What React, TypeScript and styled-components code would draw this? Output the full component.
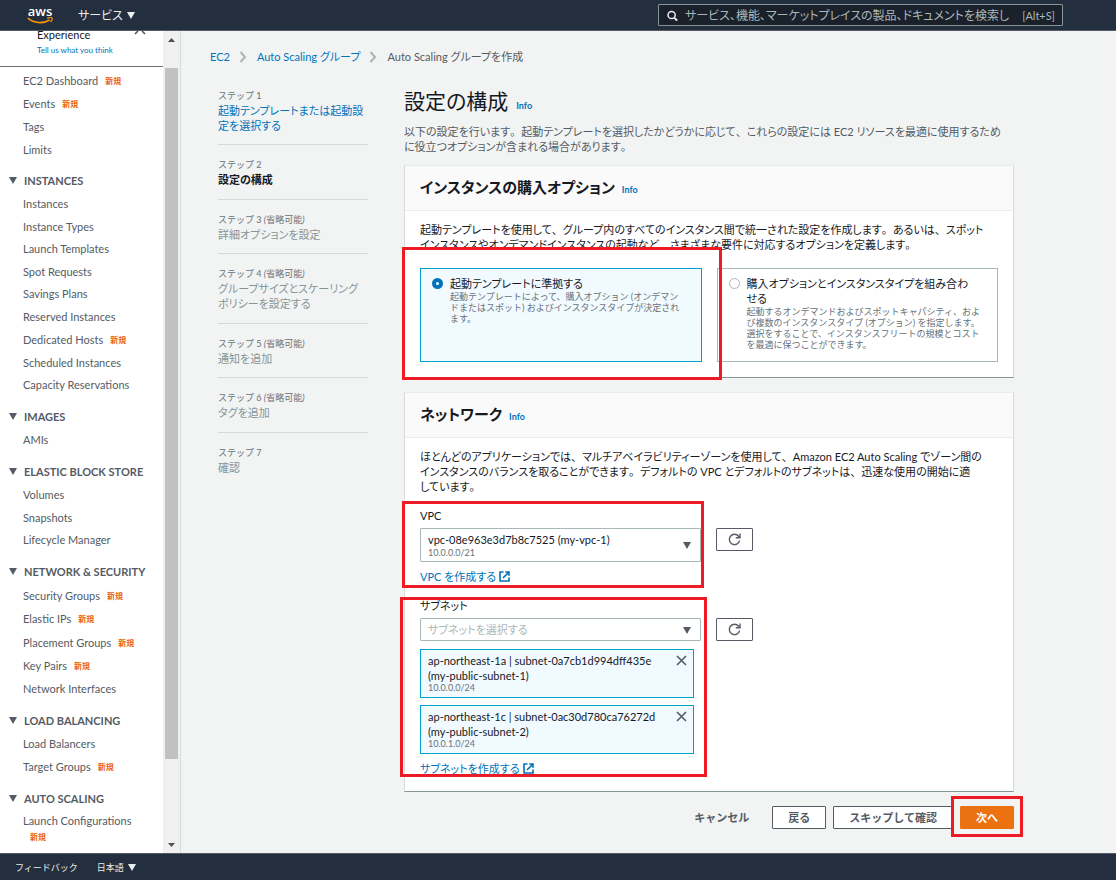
import React from "react";
import styled, { createGlobalStyle, css } from "styled-components";

const GlobalStyle = createGlobalStyle`
  *, *::before, *::after { box-sizing: border-box; }
  body {
    margin: 0;
    font-family: Lato, "Noto Sans CJK JP", sans-serif;
    font-size: 11px;
    line-height: 15px;
    font-feature-settings: "palt";
    color: #16191f;
    background: #f2f3f3;
  }
  button, input, select { font: inherit; font-feature-settings: inherit; color: inherit; margin: 0; }
  a { color: #0073bb; text-decoration: none; }
  h1, h2, h3, p, ul, ol { margin: 0; padding: 0; }
  ul, ol { list-style: none; }
`;

/* Small print and button labels keep full-width kana. */
const fullWidthKana = css`font-feature-settings: normal;`;

const Page = styled.div`
  display: flex;
  flex-direction: column;
  min-height: 100vh;
`;

/* ---------- top bar ---------- */
const TopBar = styled.header`
  display: flex;
  align-items: center;
  height: 31px;
  padding: 0 53px 0 27px;
  background: #232f3e;
  border-bottom: 1px solid #545b64;
  color: #fff;
`;

const Logo = styled.a`
  display: flex;
  flex-direction: column;
  align-items: center;
  width: 26px;
  margin-right: 25px;
  color: #fff;
  font-family: "Open Sans", sans-serif;
  font-size: 13px;
  font-weight: 600;
  line-height: 11px;
`;

const MenuButton = styled.button<{ $small?: boolean }>`
  display: flex;
  align-items: center;
  gap: 4px;
  padding: 0;
  border: 0;
  background: none;
  color: #eaeded;
  font-size: ${(p) => (p.$small ? 9 : 12)}px;
  cursor: pointer;
`;

const SearchBox = styled.label`
  display: flex;
  align-items: center;
  gap: 7px;
  width: 405px;
  height: 22px;
  margin-left: auto;
  padding: 0 7px 0 8px;
  border: 1px solid #879596;
  border-radius: 1px;
  background: #1a212b;
  color: #aab7b8;
`;

const SearchInput = styled.input`
  flex: 1;
  min-width: 0;
  padding: 0;
  border: 0;
  outline: 0;
  background: none;
  font-size: 12px;
  &::placeholder { color: #aab7b8; opacity: 1; }
`;

/* ---------- body ---------- */
const Body = styled.div`
  display: flex;
  flex: 1;
`;

const Sidebar = styled.nav`
  width: 163px;
  flex: none;
  height: calc(100vh - 58px);
  overflow: hidden;
  background: #fff;
  color: #545b64;
`;

const Experience = styled.div`
  display: flex;
  justify-content: space-between;
  height: 36px;
  margin-bottom: 1px;
  padding: 0 17px 0 37px;
  border-bottom: 1px solid #687078;
  color: #16191f;
  line-height: 8px;
`;

const ExperienceLink = styled.a`
  display: block;
  margin-top: 4px;
  font-size: 8px;
  line-height: 15px;
`;

const NavGroup = styled.section`
  margin-bottom: 9px;
`;

const NavTitle = styled.h3`
  display: flex;
  align-items: center;
  gap: 7px;
  height: 23px;
  padding-left: 9px;
  font-size: 11px;
  font-weight: 700;
`;

const NavItem = styled.li<{ $badge?: boolean }>`
  display: flex;
  flex-wrap: wrap;
  align-items: center;
  column-gap: 7px;
  min-height: ${(p) => (p.$badge ? 24 : 23)}px;
  padding: 0 12px 0 23px;
  &:nth-child(even) { min-height: ${(p) => (p.$badge ? 23 : 22)}px; }
`;

const NavLink = styled.a`
  color: #545b64;
  line-height: 21px;
  white-space: nowrap;
`;

const NewBadge = styled.span<{ $wrapped?: boolean }>`
  padding: ${(p) => (p.$wrapped ? "0 0 0 7px" : "2px 0 0")};
  color: #eb5f07;
  font-size: 8px;
  font-weight: 700;
  line-height: 13px;
`;

const Scrollbar = styled.div`
  display: flex;
  flex-direction: column;
  align-items: center;
  width: 18px;
  flex: none;
  padding: 7px 2px 6px 1px;
  background: #f0f0f0;
  border-right: 1px solid #d5dbdb;
`;

const Track = styled.div`
  display: flex;
  flex-direction: column;
  flex: 1;
  width: 13px;
  padding: 26px 0 84px;
`;

const Thumb = styled.div`
  flex: 1;
  background: #c1c1c1;
`;

const Main = styled.main`
  flex: 1;
  min-width: 0;
  padding: 18px 102px 22px 29px;
`;

const Crumbs = styled.ol`
  display: flex;
  align-items: center;
  gap: 10px;
  color: #545b64;
  li { display: flex; align-items: center; gap: 9px; }
`;

const Columns = styled.div`
  display: flex;
  gap: 36px;
  padding: 23px 0 0 8px;
`;

const Steps = styled.ol`
  width: 150px;
  flex: none;
  padding-top: 1px;
`;

const Step = styled.li`
  padding-bottom: 11px;
  margin-bottom: 12px;
  border-bottom: 1px solid #d5dbdb;
  &:nth-child(even) { padding-bottom: 12px; }
  &:last-child { border-bottom: 0; }
`;

const StepNumber = styled.div`
  ${fullWidthKana}
  color: #687078;
  font-size: 9px;
  white-space: nowrap;
  em { font-style: italic; font-synthesis: none; }
`;

const StepName = styled.div<{ $current?: boolean }>`
  color: ${(p) => (p.$current ? "#16191f" : "#879596")};
  font-weight: ${(p) => (p.$current ? 700 : 400)};
  white-space: nowrap;
`;

const Content = styled.form`
  flex: 1;
  min-width: 0;
`;

const TitleRow = styled.div`
  display: flex;
  align-items: baseline;
  gap: 8px;
`;

const PageTitle = styled.h1`
  font-size: 21px;
  font-weight: 400;
  line-height: 27px;
`;

const InfoLink = styled.a`
  font-size: 9px;
  font-weight: 700;
`;

const Intro = styled.p`
  margin: 10px 0 11px;
  color: #545b64;
`;

const Punctuation = styled.span`
  ${fullWidthKana}
`;

const Card = styled.section`
  margin-bottom: 14px;
  border: 1px solid #d5dbdb;
  border-top-color: #eaeded;
  border-bottom-color: #879596;
  background: #fff;
`;

const CardHeader = styled.header`
  display: flex;
  align-items: baseline;
  gap: 7px;
  padding: 11px 15px 13px;
  border-bottom: 1px solid #eaeded;
  background: #fafafa;
`;

const CardTitle = styled.h2`
  font-size: 15px;
  font-weight: 700;
  line-height: 20px;
`;

const CardBody = styled.div`
  padding: 11px 15px 15px;
`;

const Tiles = styled.div`
  display: flex;
  gap: 15px;
  margin-top: 16px;
`;

/* Red marker frame laid over the part that a reader has to look at. */
const Marker = styled.span<{ $inset: string }>`
  position: absolute;
  inset: ${(p) => p.$inset};
  z-index: 2;
  border: 3px solid #ed1c24;
  pointer-events: none;
`;

const Marked = styled.div`
  position: relative;
`;

const TileSlot = styled(Marked)`
  display: flex;
  flex: 1 1 0;
  min-width: 0;
`;

const Tile = styled.label<{ $selected?: boolean }>`
  display: flex;
  flex: 1;
  gap: 7px;
  min-height: 94px;
  padding: 7px 15px 11px 11px;
  border: 1px solid ${(p) => (p.$selected ? "#00a1c9" : "#aab7b8")};
  background: ${(p) => (p.$selected ? "#f1faff" : "#fff")};
`;

const Radio = styled.input`
  appearance: none;
  flex: none;
  width: 11px;
  height: 11px;
  margin: 2px 0 0;
  border: 1px solid #aab7b8;
  border-radius: 50%;
  background: #fff;
  &:checked { border: 4px solid #0073bb; }
`;

const TileTitle = styled.span`
  display: block;
  padding-right: 8px;
`;

const TileHint = styled.span`
  ${fullWidthKana}
  display: block;
  color: #687078;
  font-size: 9px;
  line-height: 11px;
`;

const Field = styled(Marked)`
  width: 281px;
`;

const FieldRow = styled.div`
  display: flex;
  align-items: flex-start;
  gap: 15px;
  margin-top: 14px;
`;

const FieldLabel = styled.label`
  display: block;
  margin-bottom: 5px;
`;

const SelectBox = styled.div`
  position: relative;
  display: flex;
  svg {
    position: absolute;
    right: 10px;
    top: calc(50% - 3px);
    pointer-events: none;
  }
`;

const Select = styled.select<{ $tall?: boolean }>`
  appearance: none;
  width: 100%;
  height: ${(p) => (p.$tall ? 34 : 23)}px;
  padding: ${(p) => (p.$tall ? "1px 24px 13px 7px" : "0 24px 0 7px")};
  border: 1px solid #aab7b8;
  border-radius: 1px;
  background: #fff;
  color: ${(p) => (p.$tall ? "#16191f" : "#aab7b8")};
`;

const SelectCaption = styled.span`
  position: absolute;
  left: 8px;
  bottom: 4px;
  color: #687078;
  font-size: 9px;
  line-height: 11px;
  pointer-events: none;
`;

const RefreshButton = styled.button`
  display: flex;
  align-items: center;
  justify-content: center;
  width: 37px;
  height: 23px;
  margin-top: 20px;
  padding: 0;
  border: 1px solid #545b64;
  border-radius: 1px;
  background: #fff;
`;

const ExternalLink = styled.a`
  display: inline-flex;
  align-items: center;
  gap: 3px;
  margin-top: 7px;
  vertical-align: top;
`;

const TokenList = styled.ul`
  padding-top: 1px;
`;

const Token = styled.li`
  display: flex;
  justify-content: space-between;
  width: 274px;
  margin-top: 7px;
  padding: 3px 6px 4px 7px;
  border: 1px solid #00a1c9;
  background: #f1faff;
`;

const TokenCaption = styled.div`
  color: #687078;
  font-size: 9px;
  line-height: 10px;
`;

const RemoveButton = styled.button`
  display: flex;
  height: 11px;
  margin-top: 2px;
  padding: 0;
  border: 0;
  background: none;
`;

const Actions = styled.div`
  display: flex;
  justify-content: flex-end;
  gap: 7px;
`;

const Button = styled.button<{ $kind?: "link" | "primary" }>`
  height: 23px;
  padding: 0 15px;
  border: 1px solid #545b64;
  border-radius: 1px;
  background: #fff;
  color: #545b64;
  font-weight: 700;
  line-height: 19px;
  white-space: nowrap;
  && { ${fullWidthKana} }
  ${(p) => p.$kind === "link" && css`border-color: transparent; background: none;`}
  ${(p) => p.$kind === "primary" && css`border-color: #ec7211; background: #ec7211; color: #fff;`}
`;

const BottomBar = styled.footer`
  ${fullWidthKana}
  display: flex;
  align-items: center;
  gap: 19px;
  height: 27px;
  padding: 0 15px;
  background: #232f3e;
  border-top: 1px solid #545b64;
  font-size: 9px;
  a { color: #eaeded; }
`;

/* ---------- drawings ---------- */
const Caret = ({ up = false, size = 8, color = "#545b64", tall = 7 }) => (
  <svg width={size} height={tall} viewBox="0 0 8 7" preserveAspectRatio="none" aria-hidden="true">
    <path d={up ? "M0 7h8L4 0z" : "M0 0h8L4 7z"} fill={color} />
  </svg>
);

const Chevron = () => (
  <svg width="8" height="12" viewBox="0 0 8 12" fill="none" stroke="#aab7b8" strokeWidth="2" aria-hidden="true">
    <path d="M1.5 1L6 6l-4.5 5" />
  </svg>
);

const RefreshIcon = () => (
  <svg width="13" height="13" viewBox="0 0 13 13" fill="none" stroke="#545b64" strokeWidth="1.4" aria-hidden="true">
    <path d="M11.6 7.6A5.2 5.2 0 1 1 10.6 3.2L11.8 4.6" />
    <path d="M12 .6V4.8H7.8" />
  </svg>
);

const ExternalIcon = () => (
  <svg width="11" height="11" viewBox="0 0 11 11" fill="none" stroke="#0073bb" strokeWidth="1.6" aria-hidden="true">
    <path d="M4.5 1H1v9h9V6.5M6.3 1H10v3.7M10 1L4 7" />
  </svg>
);

const CloseIcon = () => (
  <svg width="11" height="11" viewBox="0 0 11 11" stroke="#545b64" strokeWidth="1.6" aria-hidden="true">
    <path d="M1 1l9 9M10 1l-9 9" />
  </svg>
);

const SearchIcon = () => (
  <svg width="11" height="12" viewBox="0 0 11 12" fill="none" stroke="#eaeded" aria-hidden="true">
    <circle cx="4.6" cy="6" r="3.6" strokeWidth="1.5" />
    <path d="M7.2 8.6l3 3" strokeWidth="2" />
  </svg>
);

const Smile = () => (
  <svg width="26" height="7" viewBox="0 0 26 7" fill="none" stroke="#f90" aria-hidden="true">
    <path d="M.8 1.2C7 6.4 16 7 22.6 3" strokeWidth="1.6" />
    <path d="M20.2 1.4c2-.8 4.4-.9 4.8-.4s-.2 2.6-1.5 4.2" strokeWidth="1.2" />
  </svg>
);

/* ---------- data ---------- */
type Item = [string, boolean?];
const groups: { title?: string; items: Item[] }[] = [
  { items: [["EC2 Dashboard", true], ["Events", true], ["Tags"], ["Limits"]] },
  {
    title: "INSTANCES",
    items: [
      ["Instances"], ["Instance Types"], ["Launch Templates"], ["Spot Requests"], ["Savings Plans"],
      ["Reserved Instances"], ["Dedicated Hosts", true], ["Scheduled Instances"], ["Capacity Reservations"],
    ],
  },
  { title: "IMAGES", items: [["AMIs"]] },
  { title: "ELASTIC BLOCK STORE", items: [["Volumes"], ["Snapshots"], ["Lifecycle Manager"]] },
  {
    title: "NETWORK & SECURITY",
    items: [["Security Groups", true], ["Elastic IPs", true], ["Placement Groups", true], ["Key Pairs", true], ["Network Interfaces"]],
  },
  { title: "LOAD BALANCING", items: [["Load Balancers"], ["Target Groups", true]] },
  { title: "AUTO SCALING", items: [["Launch Configurations", true]] },
];

const steps: { n: number; optional?: boolean; lines: string[]; link?: boolean; current?: boolean }[] = [
  { n: 1, lines: ["起動テンプレートまたは起動設", "定を選択する"], link: true },
  { n: 2, lines: ["設定の構成"], current: true },
  { n: 3, optional: true, lines: ["詳細オプションを設定"] },
  { n: 4, optional: true, lines: ["グループサイズとスケーリング", "ポリシーを設定する"] },
  { n: 5, optional: true, lines: ["通知を追加"] },
  { n: 6, optional: true, lines: ["タグを追加"] },
  { n: 7, lines: ["確認"] },
];

const introLines = [
  "以下の設定を行います。起動テンプレートを選択したかどうかに応じて、これらの設定には EC2 リソースを最適に使用するため",
  "に役立つオプションが含まれる場合があります。",
];

const purchaseLines = [
  "起動テンプレートを使用して、グループ内のすべてのインスタンス間で統一された設定を作成します。あるいは、スポット",
  "インスタンスやオンデマンドインスタンスの起動など、さまざまな要件に対応するオプションを定義します。",
];

const networkLines = [
  "ほとんどのアプリケーションでは、マルチアベイラビリティーゾーンを使用して、Amazon EC2 Auto Scaling でゾーン間の",
  "インスタンスのバランスを取ることができます。デフォルトの VPC とデフォルトのサブネットは、迅速な使用の開始に適",
  "しています。",
];

const subnets = [
  { id: "ap-northeast-1a | subnet-0a7cb1d994dff435e", name: "(my-public-subnet-1)", cidr: "10.0.0.0/24" },
  { id: "ap-northeast-1c | subnet-0ac30d780ca76272d", name: "(my-public-subnet-2)", cidr: "10.0.1.0/24" },
];

/* Proportional kana with full-width 、 and 。 between the clauses. */
const Lines = ({ lines }: { lines: string[] }) => (
  <>
    {lines.map((line, i) => (
      <React.Fragment key={line}>
        {i > 0 && <br />}
        {line.split(/([、。])/).map((part, j) => (j % 2 ? <Punctuation key={j}>{part}</Punctuation> : part))}
      </React.Fragment>
    ))}
  </>
);

export default function App() {
  return (
    <Page>
      <GlobalStyle />
      <TopBar>
        <Logo href="#">
          aws
          <Smile />
        </Logo>
        <MenuButton>
          サービス <Caret color="#eaeded" />
        </MenuButton>
        <SearchBox>
          <SearchIcon />
          <SearchInput type="text" aria-label="検索" placeholder="サービス、機能、マーケットプレイスの製品、ドキュメントを検索し" />
          <span>[Alt+S]</span>
        </SearchBox>
      </TopBar>

      <Body>
        <Sidebar>
          <Experience>
            <div>
              Experience
              <ExperienceLink href="#">Tell us what you think</ExperienceLink>
            </div>
            <svg width="12" height="4" viewBox="0 0 12 4" stroke="#545b64" strokeWidth="1.6" aria-hidden="true">
              <path d="M4 0L1 3M8 0l3 3" />
            </svg>
          </Experience>
          {groups.map((group, g) => (
            <NavGroup key={g}>
              {group.title && (
                <NavTitle>
                  <Caret />
                  {group.title}
                </NavTitle>
              )}
              <ul>
                {group.items.map(([name, isNew]) => (
                  <NavItem key={name} $badge={isNew}>
                    <NavLink href="#">{name}</NavLink>
                    {isNew && <NewBadge $wrapped={name === "Launch Configurations"}>新規</NewBadge>}
                  </NavItem>
                ))}
              </ul>
            </NavGroup>
          ))}
        </Sidebar>
        <Scrollbar aria-hidden="true">
          <Caret up size={7} tall={4} color="#505050" />
          <Track>
            <Thumb />
          </Track>
          <Caret size={7} tall={4} color="#505050" />
        </Scrollbar>

        <Main>
          <nav aria-label="パンくず">
            <Crumbs>
              <li><a href="#">EC2</a><Chevron /></li>
              <li><a href="#">Auto Scaling グループ</a><Chevron /></li>
              <li>Auto Scaling グループを作成</li>
            </Crumbs>
          </nav>
          <Columns>
            <Steps>
              {steps.map((s) => (
                <Step key={s.n}>
                  <StepNumber>
                    ステップ {s.n} {s.optional && <em>(省略可能)</em>}
                  </StepNumber>
                  <StepName $current={s.current}>
                    {s.link ? <a href="#"><Lines lines={s.lines} /></a> : <Lines lines={s.lines} />}
                  </StepName>
                </Step>
              ))}
            </Steps>

            <Content onSubmit={(e) => e.preventDefault()}>
              <TitleRow>
                <PageTitle>設定の構成</PageTitle>
                <InfoLink href="#">Info</InfoLink>
              </TitleRow>
              <Intro>
                <Lines lines={introLines} />
              </Intro>

              <Card>
                <CardHeader>
                  <CardTitle>インスタンスの購入オプション</CardTitle>
                  <InfoLink href="#">Info</InfoLink>
                </CardHeader>
                <CardBody>
                  <p>
                    <Lines lines={purchaseLines} />
                  </p>
                  <Tiles>
                    <TileSlot>
                      <Tile $selected>
                        <Radio type="radio" name="purchase" defaultChecked />
                        <span>
                          <TileTitle>起動テンプレートに準拠する</TileTitle>
                          <TileHint>
                            起動テンプレートによって、購入オプション (オンデマンドまたはスポット) およびインスタンスタイプが決定されます。
                          </TileHint>
                        </span>
                      </Tile>
                      <Marker $inset="-21px -20px -18px -18px" />
                    </TileSlot>
                    <TileSlot>
                      <Tile>
                        <Radio type="radio" name="purchase" />
                        <span>
                          <TileTitle>購入オプションとインスタンスタイプを組み合わせる</TileTitle>
                          <TileHint>
                            起動するオンデマンドおよびスポットキャパシティ、および複数のインスタンスタイプ (オプション) を指定します。選択をすることで、インスタンスフリートの規模とコストを最適に保つことができます。
                          </TileHint>
                        </span>
                      </Tile>
                    </TileSlot>
                  </Tiles>
                </CardBody>
              </Card>

              <Card>
                <CardHeader>
                  <CardTitle>ネットワーク</CardTitle>
                  <InfoLink href="#">Info</InfoLink>
                </CardHeader>
                <CardBody>
                  <p>
                    <Lines lines={networkLines} />
                  </p>
                  <FieldRow>
                    <Field>
                      <FieldLabel htmlFor="vpc">VPC</FieldLabel>
                      <SelectBox>
                        <Select id="vpc" $tall>
                          <option>vpc-08e963e3d7b8c7525 (my-vpc-1)</option>
                        </Select>
                        <SelectCaption>10.0.0.0/21</SelectCaption>
                        <Caret />
                      </SelectBox>
                      <ExternalLink href="#">VPC を作成する<ExternalIcon /></ExternalLink>
                      <Marker $inset="-7px -3px -4px -18px" />
                    </Field>
                    <RefreshButton type="button" aria-label="VPC を更新"><RefreshIcon /></RefreshButton>
                  </FieldRow>
                  <FieldRow>
                    <Field>
                      <FieldLabel htmlFor="subnet">サブネット</FieldLabel>
                      <SelectBox>
                        <Select id="subnet">
                          <option>サブネットを選択する</option>
                        </Select>
                        <Caret />
                      </SelectBox>
                      <TokenList>
                        {subnets.map((s) => (
                          <Token key={s.id}>
                            <div>
                              {s.id}
                              <br />
                              {s.name}
                              <TokenCaption>{s.cidr}</TokenCaption>
                            </div>
                            <RemoveButton type="button" aria-label={s.name + " を削除"}><CloseIcon /></RemoveButton>
                          </Token>
                        ))}
                      </TokenList>
                      <ExternalLink href="#">サブネットを作成する<ExternalIcon /></ExternalLink>
                      <Marker $inset="-1px -6px -1px -20px" />
                    </Field>
                    <RefreshButton type="button" aria-label="サブネットを更新"><RefreshIcon /></RefreshButton>
                  </FieldRow>
                </CardBody>
              </Card>

              <Actions>
                <Button type="button" $kind="link">キャンセル</Button>
                <Button type="button">戻る</Button>
                <Button type="button">スキップして確認</Button>
                <Marked>
                  <Button type="submit" $kind="primary">次へ</Button>
                  <Marker $inset="-10px -9px -8px -9px" />
                </Marked>
              </Actions>
            </Content>
          </Columns>
        </Main>
      </Body>

      <BottomBar>
        <a href="#">フィードバック</a>
        <MenuButton $small>
          日本語 <Caret color="#eaeded" />
        </MenuButton>
      </BottomBar>
    </Page>
  );
}
